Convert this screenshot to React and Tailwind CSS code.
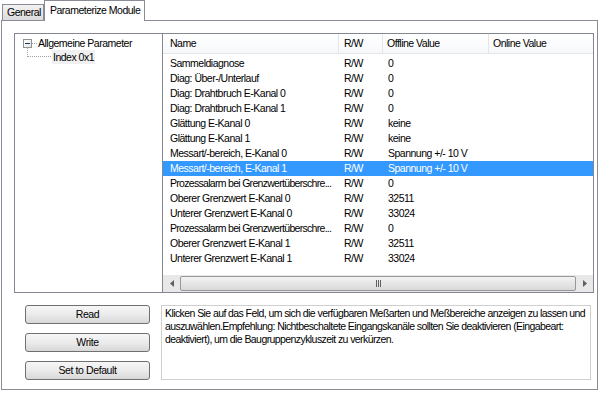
import React from 'react';

// Parameter rows shown in the grid
const rows = [
  ['Sammeldiagnose', 'R/W', '0'],
  ['Diag: Über-/Unterlauf', 'R/W', '0'],
  ['Diag: Drahtbruch E-Kanal 0', 'R/W', '0'],
  ['Diag: Drahtbruch E-Kanal 1', 'R/W', '0'],
  ['Glättung E-Kanal 0', 'R/W', 'keine'],
  ['Glättung E-Kanal 1', 'R/W', 'keine'],
  ['Messart/-bereich, E-Kanal 0', 'R/W', 'Spannung +/- 10 V'],
  ['Messart/-bereich, E-Kanal 1', 'R/W', 'Spannung +/- 10 V'],
  ['Prozessalarm bei Grenzwertüberschre...', 'R/W', '0'],
  ['Oberer Grenzwert E-Kanal 0', 'R/W', '32511'],
  ['Unterer Grenzwert E-Kanal 0', 'R/W', '33024'],
  ['Prozessalarm bei Grenzwertüberschre...', 'R/W', '0'],
  ['Oberer Grenzwert E-Kanal 1', 'R/W', '32511'],
  ['Unterer Grenzwert E-Kanal 1', 'R/W', '33024'],
];

const SELECTED = 7;

function WinButton({ children }) {
  return (
    <button className="h-[19px] w-[125px] rounded-[3px] border border-[#707070] bg-gradient-to-b from-[#f6f6f6] via-[#ebebeb] to-[#d8d8d8] text-[10.5px] leading-none tracking-[-0.4px] text-black">
      {children}
    </button>
  );
}

function TreeView() {
  return (
    <div className="relative w-[149px] shrink-0 border border-[#828790] bg-white">
      {/* root node */}
      <div className="absolute left-[8px] top-[2px] flex items-center">
        <div className="flex h-[9px] w-[9px] items-center justify-center border border-[#919191] bg-gradient-to-br from-white to-[#e6e6e6]">
          <div className="h-px w-[5px] bg-[#1e395b]" />
        </div>
        <div className="w-[5px] border-t border-dotted border-[#a0a0a0]" />
        <span className="ml-[1px] whitespace-nowrap leading-[14px] text-black">Allgemeine Parameter</span>
      </div>
      {/* connector to child */}
      <div className="absolute left-[12px] top-[13px] h-[10px] border-l border-dotted border-[#a0a0a0]" />
      <div className="absolute left-[12px] top-[22px] w-[24px] border-t border-dotted border-[#a0a0a0]" />
      <div className="absolute left-[37px] top-[16px] whitespace-nowrap bg-[#f0f0f0] px-[1px] leading-[14px] text-black">
        Index 0x1
      </div>
    </div>
  );
}

function ParamGrid() {
  const cols = 'grid grid-cols-[176px_44px_106px_1fr]';
  return (
    <div className="flex flex-1 flex-col border border-l-0 border-[#828790] bg-white">
      {/* column header */}
      <div className={`${cols} h-[20px] border-b border-[#e5e5e5] bg-gradient-to-b from-white to-[#f7f8fa] text-black`}>
        <div className="flex items-center border-r border-[#e5e5e5] pl-[7px]">Name</div>
        <div className="flex items-center border-r border-[#e5e5e5] pl-[5px]">R/W</div>
        <div className="flex items-center border-r border-[#e5e5e5] pl-[4px]">Offline Value</div>
        <div className="flex items-center pl-[4px]">Online Value</div>
      </div>

      <div className="mt-[2px] flex flex-1 flex-col">
        {rows.map((r, i) => (
          <div
            key={i}
            className={`${cols} h-[15px] leading-[15px] ${i === SELECTED ? 'bg-[#3399ff] text-white' : 'text-black'}`}
          >
            <div className={`overflow-hidden whitespace-nowrap pl-[7px] ${r[0].endsWith('...') ? 'tracking-[-0.7px]' : ''}`}>{r[0]}</div>
            <div className="pl-[5px]">{r[1]}</div>
            <div className="whitespace-nowrap pl-[5px]">{r[2]}</div>
            <div />
          </div>
        ))}
      </div>

      {/* horizontal scrollbar */}
      <div className="flex h-[17px] items-center bg-[#e8e8e8]">
        <div className="flex h-full w-[17px] items-center justify-center">
          <svg width="4" height="7" viewBox="0 0 4 7"><path d="M4 0 L0 3.5 L4 7 Z" fill="#606060" /></svg>
        </div>
        <div className="flex h-[15px] flex-1 items-center justify-center rounded-[2px] border border-[#979797] bg-gradient-to-b from-[#f3f3f3] to-[#d9d9d9]">
          <div className="flex gap-[1px]">
            <div className="h-[7px] w-px bg-[#606060]" />
            <div className="h-[7px] w-px bg-[#606060]" />
            <div className="h-[7px] w-px bg-[#606060]" />
          </div>
        </div>
        <div className="flex h-full w-[17px] items-center justify-center">
          <svg width="4" height="7" viewBox="0 0 4 7"><path d="M0 0 L4 3.5 L0 7 Z" fill="#606060" /></svg>
        </div>
      </div>
    </div>
  );
}

export default function App() {
  return (
    <div className="h-[395px] w-[600px] bg-white font-['Liberation_Sans',Arial,sans-serif] text-[10.5px] tracking-[-0.5px] text-black">
      {/* tabs */}
      <div className="flex h-[20px] items-end pl-[2px]">
        <div className="flex h-[16px] w-[42px] items-center whitespace-nowrap border border-b-0 border-[#898c95] bg-gradient-to-b from-[#f2f2f2] to-[#dcdcdc] pl-[4px]">
          General
        </div>
        <div className="-mb-px flex h-[21px] w-[101px] items-start whitespace-nowrap border border-b-0 border-[#898c95] bg-white pl-[5px] pt-[2px]">
          Parameterize Module
        </div>
      </div>

      {/* tab page */}
      <div className="ml-[1px] flex h-[370px] w-[597px] flex-col border border-[#898c95] bg-white pl-[12px] pr-[3px] pt-[12px]">
        <div className="flex h-[260px]">
          <TreeView />
          <ParamGrid />
        </div>

        <div className="mt-[12px] flex">
          <div className="ml-[11px] flex w-[125px] flex-col gap-[9px]">
            <WinButton>Read</WinButton>
            <WinButton>Write</WinButton>
            <WinButton>Set to Default</WinButton>
          </div>
          <div className="ml-[11px] h-[75px] w-[430px] whitespace-nowrap border border-[#cfcfcf] bg-white px-[3px] pt-[1px] leading-[13px] tracking-[-0.58px]">
            Klicken Sie auf das Feld, um sich die verfügbaren Meßarten und Meßbereiche anzeigen zu lassen und
            <br />
            auszuwählen.Empfehlung: Nichtbeschaltete Eingangskanäle sollten Sie deaktivieren (Eingabeart:
            <br />
            deaktiviert), um die Baugruppenzykluszeit zu verkürzen.
          </div>
        </div>
      </div>
    </div>
  );
}
